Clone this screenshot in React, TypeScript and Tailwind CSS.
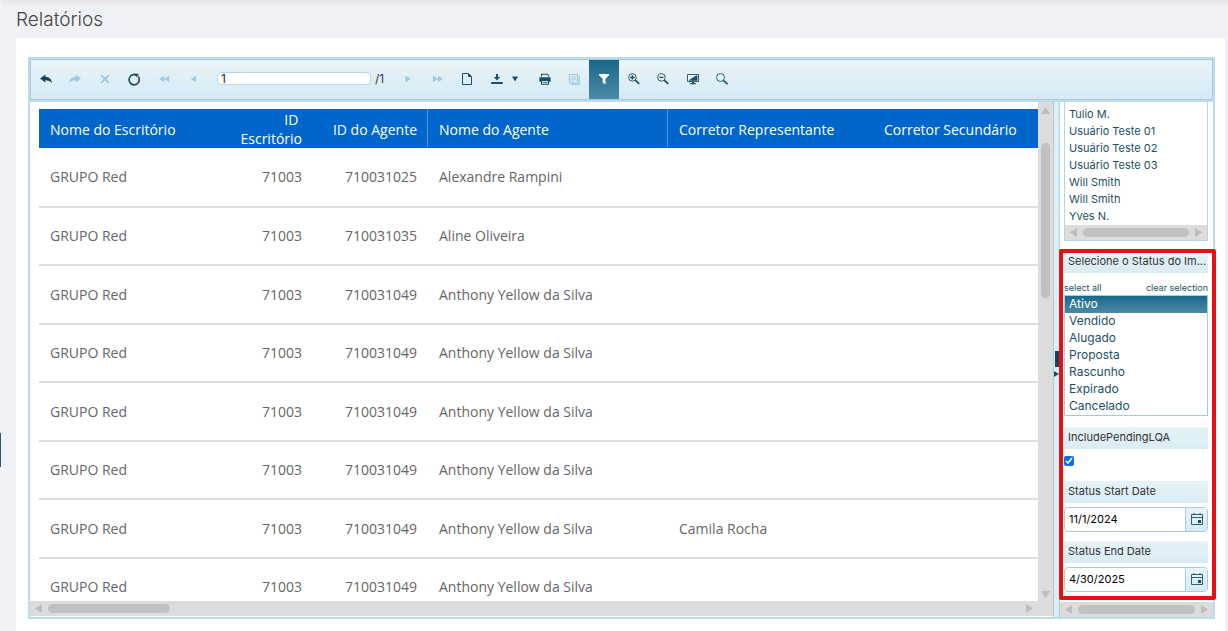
import { useState } from "react";
import type { ReactNode } from "react";

const DARK = "#1d4f64";
const LIGHT = "#9fcbde";

function Svg({ children }: { children: ReactNode }) {
  return (
    <svg width={16} height={16} viewBox="0 0 16 16" fill="none" aria-hidden="true">
      {children}
    </svg>
  );
}

const BackIcon = () => (
  <Svg>
    <path d="M2 7.4 7.4 3.4V5.8C11 6 13.6 8 14 12.2 12.2 10.2 10.4 9.4 7.4 9.3V11.6Z" fill="#12455a" />
  </Svg>
);
const ForwardIcon = () => (
  <Svg>
    <path d="M14 7.4 8.6 3.4V5.8C5 6 2.4 8 2 12.2 3.8 10.2 5.6 9.4 8.6 9.3V11.6Z" fill={LIGHT} />
  </Svg>
);
const StopIcon = () => (
  <Svg>
    <path d="M4.2 4.2 11.8 11.8M11.8 4.2 4.2 11.8" stroke={LIGHT} strokeWidth="1.9" />
  </Svg>
);
const RefreshIcon = () => (
  <Svg>
    <path d="M12.3 5.6A5.1 5.1 0 1 1 7.6 3.6" stroke={DARK} strokeWidth="1.7" />
    <path d="M7.4 2.6C9.6 2.2 11.4 2.6 13 3.2L10.6 6.2C10 5 9 4.4 7.4 4.4Z" fill={DARK} />
  </Svg>
);
const FirstIcon = () => (
  <Svg>
    <path d="M8.2 4.8V11.2L3.2 8ZM13.2 4.8V11.2L8.2 8Z" fill={LIGHT} />
  </Svg>
);
const PrevIcon = () => (
  <Svg>
    <path d="M11 4.8V11.2L5.8 8Z" fill={LIGHT} />
  </Svg>
);
const NextIcon = () => (
  <Svg>
    <path d="M5.4 4.6V11.4L10.8 8Z" fill={LIGHT} />
  </Svg>
);
const LastIcon = () => (
  <Svg>
    <path d="M3 4.8V11.2L8 8ZM8 4.8V11.2L13 8Z" fill={LIGHT} />
  </Svg>
);
const PageIcon = () => (
  <Svg>
    <path d="M3.5 2.5H9.5L12.5 5.5V13.5H3.5Z" stroke={DARK} strokeWidth="1" />
    <path d="M9 2.2V6H12.8Z" fill={DARK} />
  </Svg>
);
const ExportIcon = () => (
  <Svg>
    <path d="M7 3H9V6H11.2L8 9.4 4.8 6H7Z" fill={DARK} />
    <path d="M2.2 11H13.8V13H2.2Z" fill={DARK} />
  </Svg>
);
const CaretIcon = () => (
  <Svg>
    <path d="M5 5.6H11L8 10.6Z" fill={DARK} />
  </Svg>
);
const PrintIcon = () => (
  <Svg>
    <path d="M4.5 5.4V3.2H10.2L11.5 4.4V5.4" stroke={DARK} strokeWidth="1.1" />
    <path d="M2.4 6.2H13.6V10.8H12V9.2H4V10.8H2.4Z" fill={DARK} />
    <path d="M4.5 9.5H11.5V13.2H4.5Z" stroke={DARK} strokeWidth="1.1" />
    <path d="M5.6 11.4H10.4" stroke={DARK} strokeWidth="0.8" />
  </Svg>
);
const PreviewIcon = () => (
  <Svg>
    <path d="M3.5 3.5H11.5V12H3.5Z" stroke={LIGHT} strokeWidth="1.2" />
    <path d="M5.3 6H10M5.3 8H10M5.3 10H8" stroke={LIGHT} strokeWidth="1.2" />
    <path d="M13.2 4.5V13.4H4.5" stroke={LIGHT} strokeWidth="1.2" />
  </Svg>
);
const FilterIcon = () => (
  <Svg>
    <path d="M3 3H13V4.2L9.5 7.8V13.2L6.7 11.8V7.8L3 4.2Z" fill="#fff" />
  </Svg>
);
const ZoomLens = () => (
  <>
    <circle cx="6.4" cy="6.4" r="3.8" stroke={DARK} strokeWidth="0.9" />
    <path d="M9.2 9.2 13.2 12.8" stroke={DARK} strokeWidth="1.8" />
  </>
);
const ZoomInIcon = () => (
  <Svg>
    <ZoomLens />
    <path d="M4.2 6.4H8.6M6.4 4.2V8.6" stroke={DARK} strokeWidth="1.5" />
  </Svg>
);
const ZoomOutIcon = () => (
  <Svg>
    <ZoomLens />
    <path d="M4.4 6.4H8.4" stroke={DARK} strokeWidth="1.3" />
  </Svg>
);
const ScreenIcon = () => (
  <Svg>
    <path d="M2.5 3.5H13.5V10.5H2.5Z" stroke={DARK} strokeWidth="0.9" />
    <path d="M3.8 9.8C5 8.4 6.2 7.6 7.4 7L11 4.4H12.4V9.8Z" fill={DARK} />
    <path d="M7 10.8H9V12H10.8V13.2H5.2V12H7Z" fill={DARK} />
  </Svg>
);
const SearchIcon = () => (
  <Svg>
    <circle cx="6.5" cy="6.5" r="4" stroke={DARK} strokeWidth="0.9" />
    <path d="M9.4 9.4 13.6 13.2" stroke={DARK} strokeWidth="1.6" />
  </Svg>
);
const CalendarIcon = () => (
  <Svg>
    <path d="M2.5 3.5H13.5V13.5H2.5Z" stroke={DARK} strokeWidth="0.9" />
    <path d="M2.5 6.5H13.5" stroke={DARK} strokeWidth="0.9" />
    <path d="M5 2V4M11 2V4" stroke={DARK} strokeWidth="1" />
    <path d="M9 9H12V12H9Z" fill={DARK} />
  </Svg>
);

function ToolButton({ label, active, children }: { label: string; active?: boolean; children: ReactNode }) {
  return (
    <button
      type="button"
      aria-label={label}
      title={label}
      className={
        active
          ? "flex h-full flex-1 items-center justify-center bg-linear-to-b from-[#16688a] to-[#4a8ba6] pb-[2px]"
          : "flex h-full flex-1 items-center justify-center pb-[2px]"
      }
    >
      {children}
    </button>
  );
}

function Toolbar() {
  const [page, setPage] = useState("1");
  return (
    <div className="border-b-2 border-[#bfdbe6]">
      <div
        role="toolbar"
        aria-label="Relatório"
        className="flex h-[41px] items-center border border-[#a3cde0] bg-linear-to-b from-[#e8f4f9] to-[#d6eaf4]"
      >
        <div className="flex h-full w-[177px] shrink-0">
          <ToolButton label="Voltar"><BackIcon /></ToolButton>
          <ToolButton label="Avançar"><ForwardIcon /></ToolButton>
          <ToolButton label="Parar"><StopIcon /></ToolButton>
          <ToolButton label="Atualizar"><RefreshIcon /></ToolButton>
          <ToolButton label="Primeira página"><FirstIcon /></ToolButton>
          <ToolButton label="Página anterior"><PrevIcon /></ToolButton>
        </div>
        <label className="ml-[9px] flex w-[176px] shrink-0 items-center gap-1 pb-[2px] font-['Inter',sans-serif] text-xs text-[#334]">
          <input
            aria-label="Página atual"
            value={page}
            onChange={(e) => setPage(e.target.value)}
            className="h-[13px] w-[154px] rounded-sm border border-[#b5d8e6] bg-white px-[3px] text-xs leading-none text-[#222] outline-none"
          />
          <span>/1</span>
        </label>
        <div className="flex h-full w-[89px] shrink-0">
          <ToolButton label="Próxima página"><NextIcon /></ToolButton>
          <ToolButton label="Última página"><LastIcon /></ToolButton>
          <ToolButton label="Configurar página"><PageIcon /></ToolButton>
        </div>
        <button
          type="button"
          aria-label="Exportar"
          className="flex h-full w-12 shrink-0 items-center justify-center gap-[2px] pb-[2px]"
        >
          <ExportIcon />
          <CaretIcon />
        </button>
        <div className="flex h-full w-[207px] shrink-0">
          <ToolButton label="Imprimir"><PrintIcon /></ToolButton>
          <ToolButton label="Visualizar impressão"><PreviewIcon /></ToolButton>
          <ToolButton label="Parâmetros" active><FilterIcon /></ToolButton>
          <ToolButton label="Aumentar zoom"><ZoomInIcon /></ToolButton>
          <ToolButton label="Diminuir zoom"><ZoomOutIcon /></ToolButton>
          <ToolButton label="Tela cheia"><ScreenIcon /></ToolButton>
          <ToolButton label="Pesquisar"><SearchIcon /></ToolButton>
        </div>
      </div>
    </div>
  );
}

function Arrow({ d }: { d: string }) {
  return (
    <svg width="9" height="9" viewBox="0 0 9 9" aria-hidden="true" className="shrink-0">
      <path d={d} fill="#bdbdbd" />
    </svg>
  );
}
const LEFT = "M8 0V9L1 4.5Z";
const RIGHT = "M1 0V9L8 4.5Z";
const UP = "M0 8H9L4.5 1Z";
const DOWN = "M0 1H9L4.5 8Z";

function HScroll({ thumb }: { thumb: string }) {
  return (
    <div className="flex h-[15px] shrink-0 items-center gap-[5px] bg-[#dcdcdc] px-1">
      <Arrow d={LEFT} />
      <div className="flex-1">
        <div className={"h-[9px] rounded-full bg-[#c1c1c1] " + thumb} />
      </div>
      <Arrow d={RIGHT} />
    </div>
  );
}

type Row = { agentId: string; agent: string; broker?: string };
const rows: Row[] = [
  { agentId: "710031025", agent: "Alexandre Rampini" },
  { agentId: "710031035", agent: "Aline Oliveira" },
  { agentId: "710031049", agent: "Anthony Yellow da Silva" },
  { agentId: "710031049", agent: "Anthony Yellow da Silva" },
  { agentId: "710031049", agent: "Anthony Yellow da Silva" },
  { agentId: "710031049", agent: "Anthony Yellow da Silva" },
  { agentId: "710031049", agent: "Anthony Yellow da Silva", broker: "Camila Rocha" },
  { agentId: "710031049", agent: "Anthony Yellow da Silva" },
];

function ReportTable() {
  return (
    <table className="w-full min-w-[999px] table-fixed border-separate border-spacing-0 font-['Open_Sans',sans-serif] text-sm leading-5 text-[#666]">
      <colgroup>
        <col className="w-[189px]" />
        <col className="w-[85px]" />
        <col className="w-[115px]" />
        <col className="w-[240px]" />
        <col className="w-[205px]" />
        <col />
      </colgroup>
      <thead>
        <tr className="h-[39px] bg-[#0066cc] text-left leading-[19px] text-white">
          <th className="px-[11px] pt-[2px] pb-0 font-medium">Nome do Escritório</th>
          <th className="px-[11px] py-0 text-right font-medium">ID{"\u00a0"}<br />Escritório</th>
          <th className="border-r border-[#4a96dd] pt-[2px] pr-[10px] pb-0 text-right font-medium">ID do Agente</th>
          <th className="border-r border-[#4a96dd] px-[11px] pt-[2px] pb-0 font-medium">Nome do Agente</th>
          <th className="px-[11px] pt-[2px] pb-0 font-medium">Corretor Representante</th>
          <th className="px-[11px] pt-[2px] pb-0 font-medium">Corretor Secundário</th>
        </tr>
      </thead>
      <tbody>
        {rows.map((r, i) => (
          <tr
            key={i}
            className="h-[59px] first:h-[60px] even:h-[58px] [&>td]:border-b-2 [&>td]:border-[#dedede] [&>td]:px-[11px] [&>td]:py-0"
          >
            <td>GRUPO Red</td>
            <td className="text-right">71003</td>
            <td className="text-right">{r.agentId}</td>
            <td>{r.agent}</td>
            <td>{r.broker}</td>
            <td />
          </tr>
        ))}
      </tbody>
    </table>
  );
}

const users = ["Tulio M.", "Usuário Teste 01", "Usuário Teste 02", "Usuário Teste 03", "Will Smith", "Will Smith", "Yves N."];
const statuses = ["Ativo", "Vendido", "Alugado", "Proposta", "Rascunho", "Expirado", "Cancelado"];

function ParamTitle({ htmlFor, children }: { htmlFor?: string; children: ReactNode }) {
  return (
    <label
      htmlFor={htmlFor}
      className="block h-[22px] bg-linear-to-b from-[#e6f3f8] to-[#d9ecf4] pl-1 text-[11px] leading-[21px] whitespace-nowrap text-[#333]"
    >
      {children}
    </label>
  );
}

function DateField({ id, initial }: { id: string; initial: string }) {
  const [value, setValue] = useState(initial);
  return (
    <div className="mt-1 flex h-[25px] overflow-hidden rounded-sm border border-[#a3cde0] bg-white">
      <input
        id={id}
        value={value}
        onChange={(e) => setValue(e.target.value)}
        className="min-w-0 flex-1 px-1 text-[11px] text-black outline-none"
      />
      <button
        type="button"
        aria-label="Abrir calendário"
        className="flex w-[22px] items-center justify-center border-l border-[#a3cde0] bg-linear-to-b from-[#e8f4f9] to-[#d6eaf4] pb-px"
      >
        <CalendarIcon />
      </button>
    </div>
  );
}

function ParametersPanel() {
  const [selected, setSelected] = useState<string[]>(["Ativo"]);
  const [pending, setPending] = useState(true);
  const toggle = (s: string) =>
    setSelected((cur) => (cur.includes(s) ? cur.filter((x) => x !== s) : [...cur, s]));

  return (
    <aside className="flex w-[153px] shrink-0 flex-col font-['Inter',sans-serif] text-[#1d4f64]">
      <div className="min-h-0 flex-1 pr-[5px] pl-1">
        <div className="border-x border-b border-[#b5d8e6]">
          <ul className="pt-1 text-[11px]">
            {users.map((u, i) => (
              <li key={i} className="h-[17px] pl-1 leading-[17px]">{u}</li>
            ))}
          </ul>
          <HScroll thumb="" />
        </div>

        <section className="relative mt-[10px]">
          <ParamTitle>Selecione o Status do Im...</ParamTitle>
          <div className="flex h-[22px] items-end justify-between pb-[1px] text-[9px] leading-3">
            <button type="button" onClick={() => setSelected(statuses)}>select all</button>
            <button type="button" onClick={() => setSelected([])}>clear selection</button>
          </div>
          <ul className="border border-[#a3cde0] text-xs">
            {statuses.map((s) => (
              <li key={s}>
                <button
                  type="button"
                  aria-pressed={selected.includes(s)}
                  onClick={() => toggle(s)}
                  className={
                    selected.includes(s)
                      ? "block h-[17px] w-full bg-linear-to-b from-[#16688a] to-[#4a8ba6] pb-[2px] pl-1 text-left leading-[15px] text-white"
                      : "block h-[17px] w-full pb-[2px] pl-1 text-left leading-[15px]"
                  }
                >
                  {s}
                </button>
              </li>
            ))}
          </ul>

          <div className="mt-[11px]">
            <ParamTitle htmlFor="pending">IncludePendingLQA</ParamTitle>
            <input
              id="pending"
              type="checkbox"
              checked={pending}
              onChange={(e) => setPending(e.target.checked)}
              className="mt-[7px] block size-[10px] accent-[#0d6fe0]"
            />
          </div>
          <div className="mt-[15px]">
            <ParamTitle htmlFor="start">Status Start Date</ParamTitle>
            <DateField id="start" initial="11/1/2024" />
          </div>
          <div className="mt-[9px]">
            <ParamTitle htmlFor="end">Status End Date</ParamTitle>
            <DateField id="end" initial="4/30/2025" />
          </div>

          <div className="pointer-events-none absolute -top-[2px] -right-[8px] -bottom-[8px] -left-[5px] rounded-xs border-4 border-[#e60f14]" />
        </section>
      </div>
      <HScroll thumb="" />
    </aside>
  );
}

export default function App() {
  return (
    <div className="flex h-screen overflow-hidden bg-[#f0f1f7]">
      <nav aria-label="Menu" className="w-px shrink-0">
        <div className="mt-[433px] h-[34px] bg-[#2f566e]" />
      </nav>
      <main className="flex min-w-0 flex-1 flex-col bg-linear-to-b from-[#e4e5eb] to-[#f0f1f7] to-[6px] pr-[3px] pl-[15px]">
        <h1 className="h-[38px] shrink-0 font-['Inter',sans-serif] text-[19px] leading-10 font-light text-[#444]">
          Relatórios
        </h1>
        <div className="flex min-h-0 flex-1 flex-col bg-white pt-[19px] pr-[10px] pb-3 pl-3">
          <div className="flex min-h-0 flex-1 flex-col border-2 border-[#bfdbe6]">
            <Toolbar />
            <div className="flex min-h-0 flex-1">
              <div className="flex min-w-0 flex-1 flex-col pb-px">
                <div className="flex min-h-0 flex-1">
                  <div className="min-w-0 flex-1 overflow-hidden pt-[7px] pl-[9px]">
                    <ReportTable />
                  </div>
                  <div className="flex w-[15px] shrink-0 flex-col items-center bg-[#dcdcdc] pt-1 pb-[2px]">
                    <Arrow d={UP} />
                    <div className="mt-7 h-[155px] w-[9px] rounded-full bg-[#c1c1c1]" />
                    <div className="flex-1" />
                    <Arrow d={DOWN} />
                  </div>
                </div>
                <div className="flex bg-[#dcdcdc] pr-[15px]">
                  <div className="flex-1">
                    <HScroll thumb="w-[122px]" />
                  </div>
                </div>
              </div>
              <div className="flex w-[7px] shrink-0 flex-col items-center justify-center gap-1 border-x border-[#a9d0e0] bg-[#dceef5] pt-2">
                <div className="h-4 w-1 bg-[#12455a]" />
                <svg width="5" height="6" viewBox="0 0 5 6" aria-hidden="true">
                  <path d="M0 0V6L5 3Z" fill={DARK} />
                </svg>
              </div>
              <ParametersPanel />
            </div>
          </div>
        </div>
      </main>
    </div>
  );
}
